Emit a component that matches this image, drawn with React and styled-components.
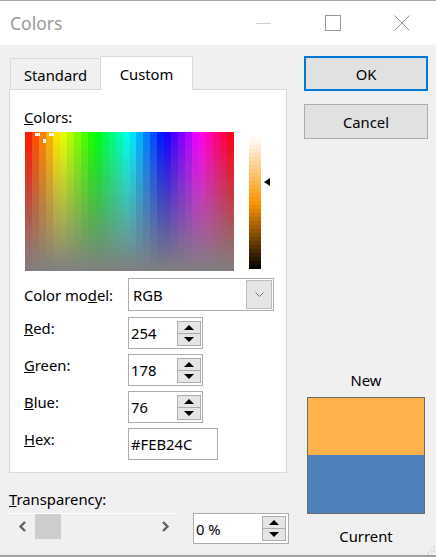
import React from "react";
import styled, { createGlobalStyle } from "styled-components";

const Global = createGlobalStyle`
  html, body { margin: 0; padding: 0; background: #f0f0f0; }
  * { box-sizing: border-box; }
`;

const Root = styled.div`
  width: 436px;
  height: 557px;
  background: #f0f0f0;
  border-top: 1px solid #a6a6a6;
  border-bottom: 2px solid #a0a0a0;
  display: flex;
  flex-direction: column;
  position: relative;
  overflow: hidden;
  font-family: "Noto Sans", "Open Sans", sans-serif;
  font-size: 14.8px;
  color: #000;
`;

const TitleBar = styled.div`
  height: 44px;
  background: #fff;
  display: flex;
  align-items: center;
  flex-shrink: 0;
`;

const Title = styled.div`
  flex: 1;
  padding-left: 10px;
  font-size: 17.5px;
  color: #9a9a9a;
`;

const CaptionButton = styled.div`
  width: 69px;
  height: 44px;
  display: flex;
  align-items: center;
  justify-content: center;
`;

const Body = styled.div`
  display: flex;
  padding: 11px 0 0 9px;
`;

const LeftColumn = styled.div`
  width: 278px;
  flex-shrink: 0;
  display: flex;
  flex-direction: column;
`;

const Tabs = styled.div`
  display: flex;
  align-items: flex-end;
  height: 33px;
  padding-left: 1px;
`;

const Tab = styled.div`
  width: ${(p) => (p.$active ? 93 : 90)}px;
  height: ${(p) => (p.$active ? 34 : 31)}px;
  margin-bottom: ${(p) => (p.$active ? -1 : 0)}px;
  background: ${(p) => (p.$active ? "#fff" : "#f0f0f0")};
  border: 1px solid #d9d9d9;
  border-bottom: none;
  border-right: ${(p) => (p.$active ? "1px solid #d9d9d9" : "none")};
  position: relative;
  z-index: ${(p) => (p.$active ? 1 : 0)};
  display: flex;
  align-items: center;
  justify-content: center;
  padding-top: ${(p) => (p.$active ? 0 : 1)}px;
`;

const Panel = styled.div`
  height: 384px;
  background: #fff;
  border: 1px solid #d9d9d9;
  padding: 17px 0 0 14px;
  display: flex;
  flex-direction: column;
`;

const Label = styled.div`
  height: 20px;
  line-height: 20px;
  white-space: nowrap;
`;

const SpectrumRow = styled.div`
  display: flex;
  margin-top: 5px;
  padding-left: 1px;
`;

const LumWrap = styled.div`
  margin-left: 15px;
  padding-top: 5px;
  position: relative;
  width: 24px;
`;

const LumArrow = styled.div`
  position: absolute;
  left: 15px;
  top: 46px;
  width: 0;
  height: 0;
  border-top: 4px solid transparent;
  border-bottom: 4px solid transparent;
  border-right: 6px solid #000;
`;

const FormGrid = styled.div`
  display: grid;
  grid-template-columns: 104px auto;
  row-gap: 5px;
  margin-top: 7px;
  align-items: start;
`;

const RowLabel = styled(Label)`
  align-self: ${(p) => (p.$center ? "center" : "start")};
  margin-top: ${(p) => (p.$center ? 0 : 1)}px;
`;

const Select = styled.div`
  width: 146px;
  height: 33px;
  border: 1px solid #adadad;
  background: #fff;
  display: flex;
  align-items: center;
  padding: 1px 1px 1px 4px;
  margin-bottom: 1px;
`;

const SelectText = styled.div`
  flex: 1;
`;

const DropButton = styled.div`
  width: 26px;
  height: 29px;
  background: #e5e5e5;
  border: 1px solid #bcbcbc;
  display: flex;
  align-items: center;
  justify-content: center;
`;

const Field = styled.div`
  width: ${(p) => p.$w}px;
  height: ${(p) => p.$h || 32}px;
  flex-shrink: 0;
  border: 1px solid #adadad;
  background: #fff;
  display: flex;
  align-items: center;
  padding: 0 ${(p) => p.$pr || 1}px 0 2px;
`;

const FieldText = styled.div`
  flex: 1;
`;

const SpinButtons = styled.div`
  width: 24px;
  display: flex;
  flex-direction: column;
`;

const SpinButton = styled.div`
  height: ${(p) => p.$h}px;
  background: #e5e5e5;
  border: 1px solid #adadad;
  border-top: ${(p) => (p.$down ? "none" : "1px solid #adadad")};
  display: flex;
  align-items: center;
  justify-content: center;
`;

const Triangle = styled.div`
  width: 0;
  height: 0;
  border-left: 5px solid transparent;
  border-right: 5px solid transparent;
  ${(p) =>
    p.$down ? "border-top: 5px solid #000;" : "border-bottom: 5px solid #000;"}
`;

const TransLabel = styled(Label)`
  margin-top: 16px;
`;

const BottomRow = styled.div`
  display: flex;
  margin-top: 4px;
  align-items: flex-start;
`;

const ScrollBar = styled.div`
  width: 169px;
  height: 26px;
  flex-shrink: 0;
  border-top: 1px solid #fff;
  display: flex;
  align-items: stretch;
`;

const ScrollArrow = styled.div`
  width: 26px;
  display: flex;
  align-items: center;
  justify-content: center;
`;

const Thumb = styled.div`
  width: 26px;
  background: #cdcdcd;
`;

const Track = styled.div`
  flex: 1;
`;

const PercentWrap = styled.div`
  margin-left: 15px;
  flex-shrink: 0;
`;

const RightColumn = styled.div`
  width: 124px;
  flex-shrink: 0;
  margin-left: 17px;
  display: flex;
  flex-direction: column;
  align-items: center;
`;

const Button = styled.div`
  width: 124px;
  height: 35px;
  margin-top: ${(p) => p.$mt || 0}px;
  background: #e1e1e1;
  border: ${(p) => (p.$default ? "2px solid #0078d7" : "1px solid #adadad")};
  display: flex;
  align-items: center;
  justify-content: center;
`;

const PreviewLabel = styled(Label)`
  margin-top: ${(p) => p.$mt}px;
  text-align: center;
`;

const Swatch = styled.div`
  width: 118px;
  height: 117px;
  margin-top: 7px;
  border: 1px solid #6b6b6b;
  display: flex;
  flex-direction: column;
`;

const SwatchHalf = styled.div`
  flex: ${(p) => p.$f};
  background: ${(p) => p.$c};
`;

const Grip = styled.svg`
  position: absolute;
  right: 0;
  bottom: 0;
`;

function Spectrum() {
  const cols = 30;
  const rows = 30;
  const W = 209;
  const H = 139;
  const rects = [];
  for (let i = 0; i < cols; i++) {
    const x0 = Math.round((i * W) / cols);
    const x1 = Math.round(((i + 1) * W) / cols);
    const h = ((i + 0.5) / cols) * 360;
    for (let j = 0; j < rows; j++) {
      const y0 = Math.round((j * H) / rows);
      const y1 = Math.round(((j + 1) * H) / rows);
      const s = 100 * (1 - (j + 0.5) / rows);
      rects.push(
        <rect
          key={i + "-" + j}
          x={x0}
          y={y0}
          width={x1 - x0}
          height={y1 - y0}
          fill={`hsl(${h.toFixed(1)}, ${s.toFixed(1)}%, 50%)`}
        />
      );
    }
  }
  return (
    <svg width={W} height={H} shapeRendering="crispEdges" style={{ display: "block" }}>
      {rects}
      <rect x="10" y="1" width="5" height="3" fill="#fff" />
      <rect x="24" y="1" width="5" height="3" fill="#fff" />
      <rect x="18" y="7" width="3" height="4" fill="#fff" />
    </svg>
  );
}

function LumBar() {
  const rows = 33;
  const H = 132;
  const rects = [];
  for (let j = 0; j < rows; j++) {
    const y0 = Math.round((j * H) / rows);
    const y1 = Math.round(((j + 1) * H) / rows);
    const l = 100 * (1 - (j + 0.5) / rows);
    rects.push(
      <rect key={j} x="0" y={y0} width="12" height={y1 - y0} fill={`hsl(34.6, 99%, ${l.toFixed(1)}%)`} />
    );
  }
  return (
    <svg width="12" height={H} shapeRendering="crispEdges" style={{ display: "block" }}>
      {rects}
    </svg>
  );
}

function Spin({ value, w, h, pr }) {
  return (
    <Field $w={w} $h={h} $pr={pr}>
      <FieldText>{value}</FieldText>
      <SpinButtons>
        <SpinButton $h={13}>
          <Triangle />
        </SpinButton>
        <SpinButton $h={12} $down>
          <Triangle $down />
        </SpinButton>
      </SpinButtons>
    </Field>
  );
}

export default function App() {
  return (
    <Root>
      <Global />
      <TitleBar>
        <Title>Colors</Title>
        <CaptionButton>
          <svg width="15" height="15">
            <line x1="0" y1="7.5" x2="15" y2="7.5" stroke="#d0d0d0" strokeWidth="1" />
          </svg>
        </CaptionButton>
        <CaptionButton>
          <svg width="16" height="16">
            <rect x="0.5" y="0.5" width="15" height="15" fill="none" stroke="#999" strokeWidth="1" />
          </svg>
        </CaptionButton>
        <CaptionButton>
          <svg width="16" height="16">
            <path d="M0.5 0.5 L15.5 15.5 M15.5 0.5 L0.5 15.5" stroke="#999" strokeWidth="1" />
          </svg>
        </CaptionButton>
      </TitleBar>
      <Body>
        <LeftColumn>
          <Tabs>
            <Tab>Standard</Tab>
            <Tab $active>Custom</Tab>
          </Tabs>
          <Panel>
            <Label>
              <u>C</u>olors:
            </Label>
            <SpectrumRow>
              <Spectrum />
              <LumWrap>
                <LumBar />
                <LumArrow />
              </LumWrap>
            </SpectrumRow>
            <FormGrid>
              <RowLabel $center>
                Color mo<u>d</u>el:
              </RowLabel>
              <Select>
                <SelectText>RGB</SelectText>
                <DropButton>
                  <svg width="9" height="5">
                    <polyline points="0.5,0.5 4.5,4.5 8.5,0.5" fill="none" stroke="#777" strokeWidth="1" />
                  </svg>
                </DropButton>
              </Select>
              <RowLabel>
                <u>R</u>ed:
              </RowLabel>
              <Spin value="254" w={75} />
              <RowLabel>
                <u>G</u>reen:
              </RowLabel>
              <Spin value="178" w={75} />
              <RowLabel>
                <u>B</u>lue:
              </RowLabel>
              <Spin value="76" w={75} />
              <RowLabel>
                <u>H</u>ex:
              </RowLabel>
              <Field $w={90}>
                <FieldText>#FEB24C</FieldText>
              </Field>
            </FormGrid>
          </Panel>
          <TransLabel>
            <u>T</u>ransparency:
          </TransLabel>
          <BottomRow>
            <ScrollBar>
              <ScrollArrow>
                <svg width="9" height="11">
                  <polyline points="7,1 2.5,5.5 7,10" fill="none" stroke="#606060" strokeWidth="2.4" />
                </svg>
              </ScrollArrow>
              <Thumb />
              <Track />
              <ScrollArrow>
                <svg width="9" height="11">
                  <polyline points="2,1 6.5,5.5 2,10" fill="none" stroke="#606060" strokeWidth="2.4" />
                </svg>
              </ScrollArrow>
            </ScrollBar>
            <PercentWrap>
              <Spin value="0 %" w={96} h={31} pr={2} />
            </PercentWrap>
          </BottomRow>
        </LeftColumn>
        <RightColumn>
          <Button $default>OK</Button>
          <Button $mt={13}>Cancel</Button>
          <PreviewLabel $mt={231}>New</PreviewLabel>
          <Swatch>
            <SwatchHalf $f={57} $c="#feb24c" />
            <SwatchHalf $f={58} $c="#4f81bd" />
          </Swatch>
          <PreviewLabel $mt={12}>Current</PreviewLabel>
        </RightColumn>
      </Body>
      <Grip width="10" height="10">
        <path d="M9 1 L1 9 M9 5 L5 9" stroke="#b0b0b0" strokeWidth="1" strokeDasharray="1 1" />
      </Grip>
    </Root>
  );
}
